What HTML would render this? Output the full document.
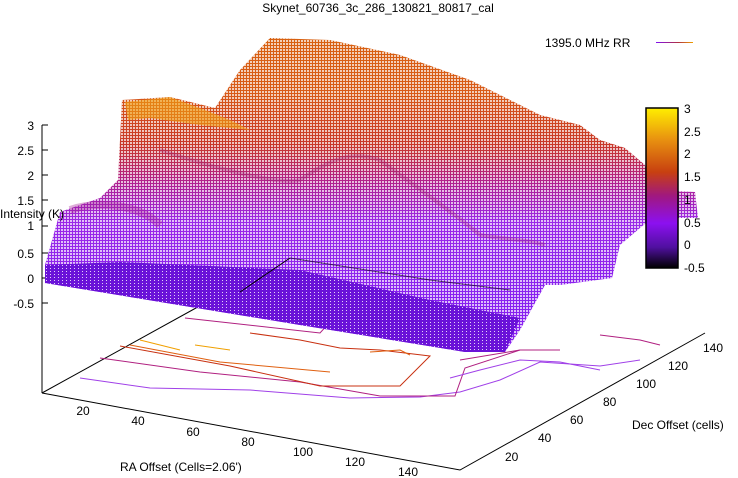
<!DOCTYPE html>
<html><head><meta charset="utf-8"><style>
html,body{margin:0;padding:0;background:#fff;}
svg{display:block;font-family:"Liberation Sans",sans-serif;font-size:12px;}
</style></head><body>
<svg width="738" height="478" viewBox="0 0 738 478" xmlns="http://www.w3.org/2000/svg">
<defs>
<linearGradient id="cb" x1="0" y1="0" x2="0" y2="1">
<stop offset="0" stop-color="#ffee00"/><stop offset="0.2" stop-color="#e89010"/>
<stop offset="0.4" stop-color="#c84010"/><stop offset="0.55" stop-color="#a01880"/>
<stop offset="0.72" stop-color="#8c10f0"/><stop offset="0.87" stop-color="#5010a0"/><stop offset="1" stop-color="#000000"/>
</linearGradient>
<linearGradient id="surf" gradientUnits="userSpaceOnUse" x1="0" y1="40" x2="0" y2="300">
<stop offset="0" stop-color="#d86010"/><stop offset="0.2" stop-color="#d85a18"/>
<stop offset="0.4" stop-color="#c83828"/><stop offset="0.55" stop-color="#b02090"/>
<stop offset="0.7" stop-color="#9a28e8"/><stop offset="1" stop-color="#8820f0"/>
</linearGradient>
<linearGradient id="leg" gradientUnits="userSpaceOnUse" x1="656" y1="0" x2="693" y2="0">
<stop offset="0" stop-color="#8010f0"/><stop offset="0.6" stop-color="#b03040"/><stop offset="1" stop-color="#f0a000"/>
</linearGradient>
<pattern id="mesh" width="3" height="3" patternUnits="userSpaceOnUse">
<rect x="1" y="1" width="2" height="2" fill="#fff" fill-opacity="0.7"/>
</pattern>
<pattern id="mesh2" width="4" height="3" patternUnits="userSpaceOnUse">
<rect x="2" y="1" width="1" height="1" fill="#fff" fill-opacity="0.8"/>
</pattern>
</defs>

<text x="378" y="12" text-anchor="middle">Skynet_60736_3c_286_130821_80817_cal</text>
<text x="545" y="47">1395.0 MHz RR</text>
<rect x="656" y="42" width="37" height="1" fill="url(#leg)"/>

<!-- z axis -->
<line x1="42" y1="125" x2="42" y2="393" stroke="#000"/>
<g text-anchor="end">
<text x="34" y="130">3</text><text x="34" y="155">2.5</text><text x="34" y="180">2</text>
<text x="34" y="205">1.5</text><text x="34" y="230">1</text><text x="34" y="258">0.5</text>
<text x="34" y="283">0</text><text x="34" y="308">-0.5</text>
</g>
<g stroke="#000"><line x1="42" y1="125" x2="48" y2="125"/><line x1="42" y1="150" x2="48" y2="150"/><line x1="42" y1="175" x2="48" y2="175"/><line x1="42" y1="200" x2="48" y2="200"/><line x1="42" y1="226" x2="48" y2="226"/><line x1="42" y1="253" x2="48" y2="253"/><line x1="42" y1="278" x2="48" y2="278"/><line x1="42" y1="303" x2="48" y2="303"/></g>

<!-- floor -->
<polyline points="42,393 460,470 705,333" fill="none" stroke="#000"/>
<polyline points="42,393 205,303" fill="none" stroke="#000"/>
<g fill="none" stroke-width="1">
<polyline points="80,378 150,388 250,390 350,398 420,397 460,392 500,380 540,362 600,366 640,360" stroke="#a040e8"/>
<polyline points="100,358 200,372 300,382 380,396 455,396 465,368 520,350" stroke="#b02080"/>
<polyline points="120,346 230,366 320,386 400,386 430,356 380,350 340,348 300,340 250,333" stroke="#c83010"/>
<polyline points="130,345 220,362 330,372" stroke="#e06010"/>
<polyline points="140,340 180,350" stroke="#f0a000"/>
<polyline points="195,345 230,350" stroke="#f0a000"/>
<polyline points="185,318 320,333 330,322" stroke="#b02080"/>
<polyline points="370,352 400,350 410,355" stroke="#e06010"/>
<polyline points="460,360 520,350 560,350" stroke="#b02080"/>
<polyline points="450,378 480,370 520,360 560,362 600,370" stroke="#a040e8"/>
<polyline points="600,335 640,340 660,345" stroke="#b02080"/>
</g>

<!-- surface -->
<polygon points="122,100 170,97 215,108 240,70 270,38 330,40 400,55 470,80 540,115 580,125 600,140 625,148 645,165 650,190 695,192 698,218 652,218 640,228 620,245 612,278 560,285 545,285 520,330 505,352 465,352 300,325 45,283 45,265 60,212 100,198 118,180" fill="url(#surf)"/>
<polygon points="122,100 170,97 215,108 240,70 270,38 330,40 400,55 470,80 540,115 580,125 600,140 625,148 645,165 650,190 695,192 698,218 652,218 640,228 620,245 612,278 560,285 545,285 520,330 505,352 465,352 300,325 45,283 45,265 60,212 100,198 118,180" fill="url(#mesh)"/>
<!-- ridges -->
<polygon points="125,102 170,97 205,110 230,120 250,130 200,125 150,118 128,120" fill="#f0a010" opacity="0.6"/>
<path d="M160,150 C220,170 280,185 300,180 C330,160 350,150 380,160 C420,190 450,210 480,235 C510,240 530,240 545,245" stroke="#a02070" stroke-width="4" fill="none" opacity="0.3"/>
<path d="M70,210 C100,200 140,205 160,225" stroke="#a01890" stroke-width="8" fill="none" opacity="0.35"/>
<!-- flat band -->
<polygon points="45,265 120,262 300,270 430,300 520,318 505,352 465,352 300,325 45,283" fill="#6a12d8"/>
<polygon points="45,265 120,262 300,270 430,300 520,318 505,352 465,352 300,325 45,283" fill="url(#mesh2)"/>
<line x1="240" y1="292" x2="290" y2="258" stroke="#000"/>
<polyline points="290,258 430,280 510,290" fill="none" stroke="#000" opacity="0.6"/>

<text x="0" y="218">Intensity (K)</text>

<!-- floor ticks -->
<g text-anchor="middle">
<text x="83" y="415">20</text><text x="138" y="425">40</text><text x="193" y="436">60</text>
<text x="248" y="446">80</text><text x="303" y="456">100</text><text x="355" y="466">120</text><text x="408" y="476">140</text>
</g>
<g>
<text x="505" y="461">20</text><text x="538" y="442">40</text><text x="570" y="424">60</text>
<text x="603" y="406">80</text><text x="636" y="388">100</text><text x="668" y="370">120</text><text x="703" y="352">140</text>
</g>
<text x="120" y="471">RA Offset (Cells=2.06')</text>
<text x="632" y="429">Dec Offset (cells)</text>

<!-- colorbox -->
<rect x="646" y="108" width="32" height="160" fill="url(#cb)" stroke="#000" stroke-width="1.5"/>
<g>
<text x="684" y="113">3</text><text x="684" y="136">2.5</text><text x="684" y="158">2</text>
<text x="684" y="181">1.5</text><text x="684" y="204">1</text><text x="684" y="227">0.5</text>
<text x="684" y="249">0</text><text x="684" y="272">-0.5</text>
</g>
</svg>
</body></html>
